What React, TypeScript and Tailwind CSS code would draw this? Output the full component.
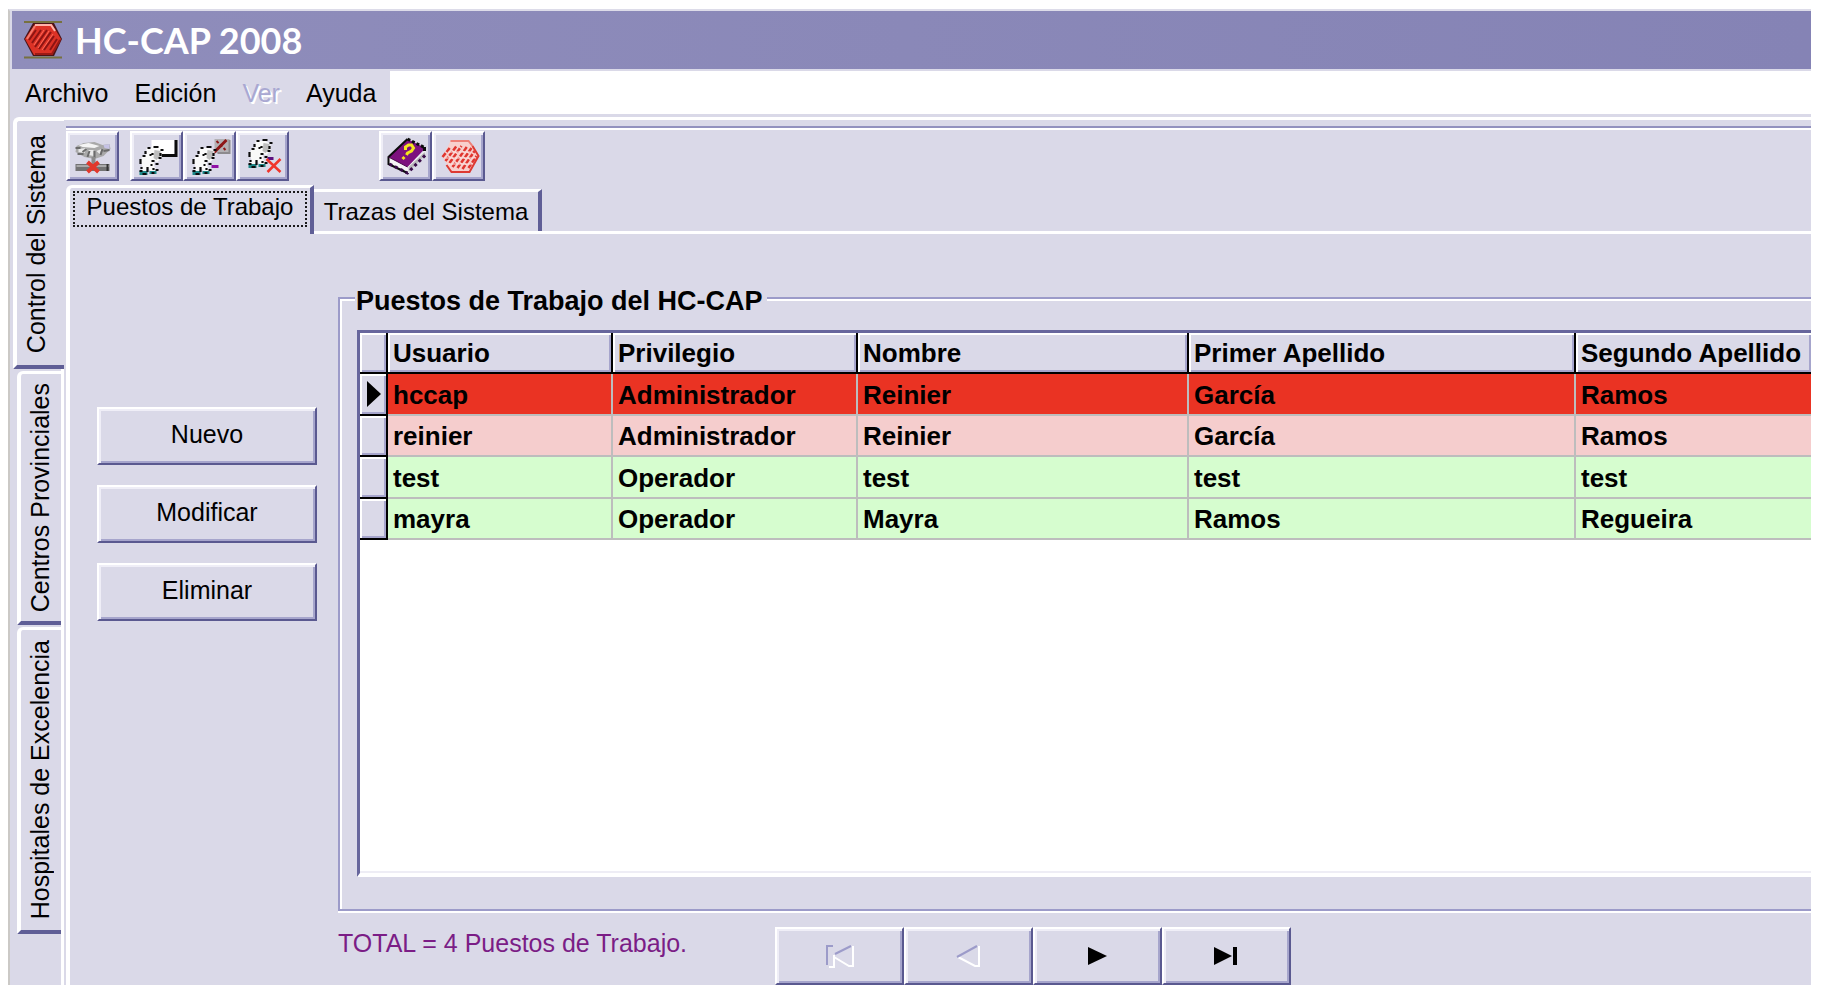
import type { ReactNode } from "react";

const raised =
  "border-2 border-t-white border-l-white border-r-[#5a5990] border-b-[#5a5990] bg-[#dad9e8] shadow-[inset_2px_2px_0_#efeef7,inset_-2px_-2px_0_#a6a5cc]";

const rows = [
  { cells: ["hccap", "Administrador", "Reinier", "García", "Ramos"], tone: "bg-[#ea3323]" },
  { cells: ["reinier", "Administrador", "Reinier", "García", "Ramos"], tone: "bg-[#f5cdcd]" },
  { cells: ["test", "Operador", "test", "test", "test"], tone: "bg-[#d6fdcf]" },
  { cells: ["mayra", "Operador", "Mayra", "Ramos", "Regueira"], tone: "bg-[#d6fdcf]" },
];

const columns = ["Usuario", "Privilegio", "Nombre", "Primer Apellido", "Segundo Apellido"];

function AppIcon() {
  return (
    <svg className="h-[38px] w-[38px]" viewBox="0 0 38 38" aria-hidden="true">
      <path d="M0 1H38M0 36.5H38" stroke="#77713f" strokeWidth="2" />
      <path d="M9 2H30L38 18L30 35H9L0 18Z" fill="#4a1418" />
      <path d="M11 3H28L37 18L28 34H10L1 18Z" fill="#dc3226" />
      <path d="M11 4H27L31 10" fill="none" stroke="#ffb3a8" strokeWidth="2" />
      <path d="M3 18L11 5" stroke="#f47a6c" strokeWidth="2" />
      <path
        d="M8 22L17 9M11 26L23 9M15 28L27 11M20 29L30 15M26 29L33 18M5 19L12 9"
        stroke="#8c1413"
        strokeWidth="2"
        fill="none"
      />
      <path d="M10 24L20 9M14 27L25 10M18 29L29 13" stroke="#ff6a58" strokeWidth="1" />
      <path d="M11 33H28L36 19" fill="none" stroke="#9d1a15" strokeWidth="2" />
    </svg>
  );
}

function ToolIcon({ children }: { children: ReactNode }) {
  return (
    <svg className="h-full w-full" viewBox="2 2 48 46" aria-hidden="true">
      {children}
    </svg>
  );
}

function Dog({ x = 0, y = 0 }: { x?: number; y?: number }) {
  return (
    <g transform={`translate(${x} ${y})`}>
      <path d="M16 17H26L31 20V26L27 31L23 30L24 36L27 40H20L17 36L15 41H10L12 36L10 30L12 25L16 23Z" fill="#f9f9f9" />
      <path d="M24 19L30 20V25L26 29L23 27Z" fill="#bdbdbd" />
      <path d="M9 40H17V44H9ZM19 40H26V43H19Z" fill="#1d8585" />
      <path
        d="M17 17H20M23 16H28M30 19H33M30 22V25M28 27H31M15 20V23M12 25H15M10 28V33M11 36V38M9 40H12M17 36V41M20 34H22M23 37V39M25 39H28M21 30H24M25 33H28M19 24H21M22 22V24M12 43H16M21 42H24"
        stroke="#0c0c0c"
        strokeWidth="2.2"
        fill="none"
      />
    </g>
  );
}

function DisconnectIcon() {
  return (
    <ToolIcon>
      <path d="M10 15L17 12L28 11L36 14L43 13L44 18L37 25L28 28L18 26L9 21Z" fill="#a9a9a9" />
      <path d="M12 14L22 12L33 15L28 17L16 16Z" fill="#f4f4f4" />
      <path d="M12 18L20 17L18 22L12 21ZM22 19H27V25L22 24ZM30 20L35 18L33 23Z" fill="#e9e9e9" />
      <path d="M9 17H14M16 21L20 18M21 26L23 20M28 27V20M34 24L36 18M37 20L43 19M11 23H17" stroke="#6c6c6c" strokeWidth="2" />
      <path d="M37 14L43 13V18L38 17Z" fill="#c6c3e6" />
      <rect x="25" y="26" width="4" height="8" fill="#8b8b8b" />
      <rect x="9" y="33" width="34" height="7" fill="#737373" />
      <path d="M10 35H43" stroke="#a9a9a9" strokeWidth="2" />
      <path d="M41 33V40" stroke="#333" strokeWidth="2" />
      <path d="M21 31L32 41M32 31L21 41" stroke="#e2382c" strokeWidth="4" />
    </ToolIcon>
  );
}

function NewUserIcon() {
  return (
    <ToolIcon>
      <path d="M21 9H44V24H32L21 18Z" fill="#fff" />
      <path d="M45.500 9V24.500H31" fill="none" stroke="#0c0c0c" strokeWidth="3" />
      <Dog />
    </ToolIcon>
  );
}

function EditUserIcon() {
  return (
    <ToolIcon>
      <rect x="31" y="8" width="15" height="14" fill="#b3b1b4" />
      <path d="M46 9V22H34" fill="none" stroke="#8d8b8e" strokeWidth="2" />
      <path d="M30 22L43 9" stroke="#8e1717" strokeWidth="3" />
      <path d="M33 10L42 19" stroke="#8e1717" strokeWidth="2" strokeDasharray="3 2" />
      <Dog />
      <rect x="28" y="34" width="7" height="3" fill="#8f10a5" />
    </ToolIcon>
  );
}

function DeleteUserIcon() {
  return (
    <ToolIcon>
      <Dog x={3} y={-7} />
      <rect x="31" y="26" width="6" height="3" fill="#5d1080" />
      <path d="M30 28L44 41M44 28L31 41" stroke="#f0352b" strokeWidth="2.500" />
    </ToolIcon>
  );
}

function BookIcon() {
  return (
    <ToolIcon>
      <path d="M9 26L28 35L46 19V24L28 42L10 33Z" fill="#f6f6f6" />
      <path d="M29 36L45 21L46 24L29 41Z" fill="#b9b9bb" />
      <path d="M28 8L46 17L28 36L9 26Z" fill="#7d117e" />
      <path d="M28 8L9 26V33L28 42" fill="none" stroke="#0c0c0c" strokeWidth="2" />
      <path d="M28 8L46 17" stroke="#0c0c0c" strokeWidth="3" strokeDasharray="3 2" />
      <path d="M9 26L28 36" stroke="#4b0a4c" strokeWidth="1" />
      <path d="M10 33L28 42L46 24" fill="none" stroke="#3a0c4a" strokeWidth="3" strokeDasharray="3 3" />
      <path d="M45 16V20" stroke="#0c0c0c" strokeWidth="3" />
      <path d="M26 19V16L29 14H32L34 17L32 20L28 22L27 24M25 26L23 28" fill="none" stroke="#f5e71c" strokeWidth="3" />
    </ToolIcon>
  );
}

function HexIcon() {
  return (
    <ToolIcon>
      <path d="M18 10H36L46 25L37 41H19L10 26Z" fill="#f8cfcc" />
      <path d="M18 10H36L40 15" fill="none" stroke="#ee7f77" strokeWidth="2" />
      <path d="M40 15L46 25L37 41H19L14 34" fill="none" stroke="#dd3a32" strokeWidth="2" />
      <path
        d="M10 26L18 16M13 30L24 15M17 32L29 15M20 36L35 15M25 37L39 17M30 38L42 20M36 37L44 25"
        stroke="#e0362f"
        strokeWidth="2.500"
        strokeDasharray="5 1.500"
        fill="none"
      />
      <path d="M16 21H38M13 27H42M16 33H40" stroke="#fbe3e3" strokeWidth="1" />
    </ToolIcon>
  );
}

function ToolButton({ label, children }: { label: string; children: ReactNode }) {
  return (
    <button type="button" aria-label={label} className={`h-[50px] w-[53px] ${raised}`}>
      {children}
    </button>
  );
}

function SideLabel({ children }: { children: ReactNode }) {
  return <span className="rotate-180 [writing-mode:vertical-rl] text-[25px] leading-8 whitespace-nowrap">{children}</span>;
}

function SideTabs() {
  const tab =
    "ml-[5px] flex items-center justify-center rounded-tl-md border-t-[3px] border-b-4 border-l-4 border-t-white border-l-white border-b-[#5f5e96] pr-[2px]";
  return (
    <div role="tablist" aria-orientation="vertical" className="flex w-[52px] shrink-0 flex-col">
      <button
        type="button"
        role="tab"
        aria-selected="true"
        className="ml-px flex h-[252px] items-center rounded-tl-md border-t-4 border-b-4 border-l-4 border-t-white border-b-[#5f5e96] border-l-white pt-[3px] pl-[3px]"
      >
        <SideLabel>Control del Sistema</SideLabel>
      </button>
      <div className="flex flex-1 flex-col gap-[2px] border-r-[3px] border-white pt-[2px]">
        <button type="button" role="tab" aria-selected="false" className={`h-[254px] ${tab}`}>
          <SideLabel>Centros Provinciales</SideLabel>
        </button>
        <button type="button" role="tab" aria-selected="false" className={`h-[307px] ${tab}`}>
          <SideLabel>Hospitales de Excelencia</SideLabel>
        </button>
      </div>
    </div>
  );
}

function Toolbar() {
  return (
    <div className="mt-[6px] ml-[2px] flex border-t-2 border-[#9291be] pt-[3px] shadow-[inset_0_2px_0_#fff]">
      <ToolButton label="Desconectar">
        <DisconnectIcon />
      </ToolButton>
      <div className="ml-[11px] flex">
        <ToolButton label="Nuevo usuario">
          <NewUserIcon />
        </ToolButton>
        <ToolButton label="Modificar usuario">
          <EditUserIcon />
        </ToolButton>
        <ToolButton label="Eliminar usuario">
          <DeleteUserIcon />
        </ToolButton>
      </div>
      <div className="ml-[90px] flex">
        <ToolButton label="Manual de ayuda">
          <BookIcon />
        </ToolButton>
        <ToolButton label="Acerca de">
          <HexIcon />
        </ToolButton>
      </div>
    </div>
  );
}

function PageTabs() {
  return (
    <div role="tablist" className="mt-1 ml-[2px] flex">
      <button
        type="button"
        role="tab"
        aria-selected="true"
        className="flex h-[49px] w-[248px] rounded-tl-md border-t-[3px] border-r-4 border-l-4 border-t-white border-r-[#5f5e96] border-l-white px-[3px] pt-[3px] pb-[7px]"
      >
        <span className="flex h-full w-full items-center justify-center border-2 border-dotted border-[#1a1a1a] pb-[5px] leading-7 whitespace-nowrap">
          Puestos de Trabajo
        </span>
      </button>
      <div className="flex flex-1 items-end border-b-[3px] border-white">
        <button
          type="button"
          role="tab"
          aria-selected="false"
          className="flex h-[42px] w-[228px] items-center justify-center border-t-[3px] border-r-4 border-t-white border-r-[#5f5e96] whitespace-nowrap"
        >
          Trazas del Sistema
        </button>
      </div>
    </div>
  );
}

function UserGrid() {
  const head =
    "overflow-hidden border-r-2 border-b-2 border-black bg-[#dad9e8] text-left whitespace-nowrap shadow-[inset_2px_2px_0_#fff,inset_-2px_-2px_0_#a6a5cc]";
  return (
    <div className="ml-[2px] flex-1 overflow-hidden border-t-[3px] border-b-4 border-l-[3px] border-t-[#67669c] border-b-white border-l-[#67669c] bg-white shadow-[inset_0_-2px_0_#eeedf5]">
      <table className="w-full table-fixed border-separate border-spacing-0 text-[26px] leading-[30px] font-bold">
        <colgroup>
          <col className="w-[28px]" />
          <col className="w-[225px]" />
          <col className="w-[245px]" />
          <col className="w-[331px]" />
          <col className="w-[387px]" />
          <col />
        </colgroup>
        <thead>
          <tr className="h-[41px]">
            <td className={head} />
            {columns.map((name) => (
              <th key={name} scope="col" className={`pt-px pl-[5px] last:border-r-0 ${head}`}>
                {name}
              </th>
            ))}
          </tr>
        </thead>
        <tbody>
          {rows.map((row, index) => (
            <tr key={row.cells[0]} className={`odd:h-[42px] even:h-[41px] ${row.tone}`}>
              <td className={`pl-1 ${head}`}>
                {index === 0 && (
                  <svg className="ml-[3px] h-[26px] w-[14px]" viewBox="0 0 14 26" aria-hidden="true">
                    <path d="M0 0L14 13L0 26Z" fill="#000" />
                  </svg>
                )}
              </td>
              {row.cells.map((cell, column) => (
                <td
                  key={column}
                  className="overflow-hidden border-r-2 border-b-2 border-[#bdbdbd] pt-px pl-[5px] whitespace-nowrap last:border-r-0"
                >
                  {cell}
                </td>
              ))}
            </tr>
          ))}
        </tbody>
      </table>
    </div>
  );
}

function RecordNavigator() {
  const item = `flex h-[58px] w-[129px] items-center justify-center ${raised}`;
  return (
    <div className="flex">
      <button type="button" disabled aria-label="Primero" className={item}>
        <svg className="h-6 w-8" viewBox="0 0 32 24" fill="none" strokeWidth="2" aria-hidden="true">
          <path d="M5 23H10V11M10 13L25 22H29V2" stroke="#fff" />
          <path d="M3 21V2H9M11 10L27 2" stroke="#9c9bc9" />
        </svg>
      </button>
      <button type="button" disabled aria-label="Anterior" className={item}>
        <svg className="h-6 w-8" viewBox="0 0 32 24" fill="none" strokeWidth="2" aria-hidden="true">
          <path d="M5 13L22 22H26V2" stroke="#fff" />
          <path d="M4 13L24 2" stroke="#9c9bc9" />
        </svg>
      </button>
      <button type="button" aria-label="Siguiente" className={item}>
        <svg className="h-6 w-8" viewBox="0 0 32 24" aria-hidden="true">
          <path d="M6 3L25 12L6 21Z" fill="#000" />
        </svg>
      </button>
      <button type="button" aria-label="Último" className={item}>
        <svg className="h-6 w-8" viewBox="0 0 32 24" aria-hidden="true">
          <path d="M3 3L21 12L3 21Z" fill="#000" />
          <rect x="22" y="3" width="4" height="18" fill="#000" />
        </svg>
      </button>
    </div>
  );
}

export default function App() {
  return (
    <div className="flex min-h-screen bg-white pt-[9px] pr-[13px] pb-[11px] pl-2 font-['Liberation_Sans',Arial,sans-serif] text-2xl text-black">
      <div className="flex min-w-0 flex-1 flex-col overflow-hidden border-t-2 border-l-2 border-t-[#dddce9] border-l-[#cbc9c6] bg-[#dad9e8] pl-[2px]">
        <header className="flex h-[58px] items-center gap-[13px] bg-linear-to-r from-[#8f8dbb] to-[#8583b5] pl-3">
          <AppIcon />
          <h1 className="font-['Lato','Liberation_Sans',sans-serif] text-[36px] leading-10 font-bold text-white">HC-CAP 2008</h1>
        </header>
        <nav className="mt-[2px] flex h-[43px]">
          <div className="flex w-[378px] items-center gap-[26px] pt-[2px] pl-[13px] text-[25px]">
            <button type="button">Archivo</button>
            <button type="button">Edición</button>
            <button type="button" disabled className="text-[#a9a8d2] [text-shadow:2px_2px_0_#fff]">
              Ver
            </button>
            <button type="button">Ayuda</button>
          </div>
          <div className="flex-1 bg-white" />
        </nav>
        <div className="mt-[3px] flex flex-1">
          <SideTabs />
          <main className="flex min-w-0 flex-1 flex-col border-t-[3px] border-white">
            <Toolbar />
            <PageTabs />
            <div className="ml-[2px] flex flex-1 border-l-4 border-white pl-[27px]">
              <div className="flex w-[220px] shrink-0 flex-col gap-5 pt-[173px]">
                {["Nuevo", "Modificar", "Eliminar"].map((label) => (
                  <button key={label} type="button" className={`h-[58px] pb-[3px] text-[25px] ${raised}`}>
                    {label}
                  </button>
                ))}
              </div>
              <section className="ml-[21px] flex min-w-0 flex-1 flex-col pt-[45px]">
                <fieldset className="flex min-w-0 flex-1 flex-col border-2 border-r-0 border-[#9c9bc9] pb-8 pl-[15px] shadow-[inset_2px_2px_0_#fff,0_2px_0_#fff]">
                  <legend className="bg-[#dad9e8] pt-[6px] pr-1 pl-px text-[27px] leading-8 font-bold">
                    Puestos de Trabajo del HC-CAP
                  </legend>
                  <div className="h-[13px] shrink-0" />
                  <UserGrid />
                </fieldset>
                <div className="flex items-start pt-4">
                  <p className="w-[437px] text-[25px] leading-8 whitespace-nowrap text-[#7b1d86]">TOTAL = 4 Puestos de Trabajo.</p>
                  <RecordNavigator />
                </div>
              </section>
            </div>
          </main>
        </div>
      </div>
    </div>
  );
}
